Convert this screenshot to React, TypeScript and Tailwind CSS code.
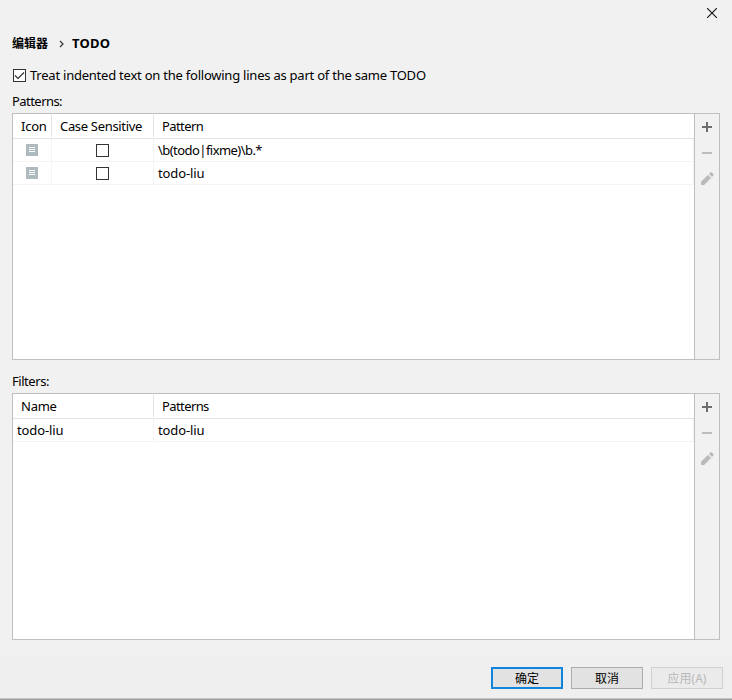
import type { ReactNode } from 'react';

const latin = "font-['Noto_Sans','Noto_Sans_CJK_SC',sans-serif]";

function Plus() {
  return (
    <svg width="16" height="16" viewBox="0 0 16 16" shapeRendering="crispEdges" fill="#6e6e6e">
      <path d="M3 7h10v2H3zM7 3h2v10H7z" />
    </svg>
  );
}

function Minus() {
  return (
    <svg width="16" height="16" viewBox="0 0 16 16" shapeRendering="crispEdges" fill="#bdbdbd">
      <path d="M3 7h10v2H3z" />
    </svg>
  );
}

function Pencil() {
  return (
    <svg width="16" height="16" viewBox="0 0 16 16" fill="#bababa">
      <path d="M2 10.8 8.9 3.9l3.1 3.1L5.1 13.9H2z" />
      <path d="M10 2.9 11.3 1.6a1.2 1.2 0 0 1 1.7 0l1.3 1.3a1.2 1.2 0 0 1 0 1.7L13 5.9z" />
    </svg>
  );
}

function LinesIcon() {
  return (
    <svg width="12" height="12" viewBox="0 0 12 12" shapeRendering="crispEdges">
      <path fill="#aeb9c0" d="M0 0h12v12H0z" />
      <path fill="#fff" d="M3 3h6v1H3zM3 5h6v1H3zM3 7h6v1H3z" />
    </svg>
  );
}

function Panel({ children }: { children: ReactNode }) {
  return (
    <div className="flex h-[247px] w-[708px] border border-[#bfbfbf] bg-white">
      <div className="w-[681px]">{children}</div>
      <div className="flex flex-1 flex-col items-center gap-[10px] border-l border-[#bfbfbf] bg-[#f1f1f1] pt-[5px]">
        <Plus />
        <Minus />
        <Pencil />
      </div>
    </div>
  );
}

function PatternRow({ children }: { children: ReactNode }) {
  return (
    <div className="flex h-[23px] border-b border-r border-[#f4f4f4]">
      <div className="flex w-[39px] items-center justify-center border-r border-[#f4f4f4]">
        <LinesIcon />
      </div>
      <div className="flex w-[102px] items-center justify-center border-r border-[#f4f4f4]">
        <div className="h-[13px] w-[13px] border border-[#333] bg-white" />
      </div>
      <div className="pl-1 leading-[22px]">{children}</div>
    </div>
  );
}

export default function App() {
  return (
    <div className={`${latin} flex h-[700px] w-[732px] flex-col overflow-hidden bg-[#f1f1f1] text-[13px] text-black`}>
      <div className="flex h-[26px] shrink-0 items-center justify-end pr-[15px]">
        <svg width="10" height="10" viewBox="0 0 10 10" stroke="#111" strokeWidth="1.1">
          <path d="M0 0l10 10M10 0L0 10" />
        </svg>
      </div>
      <div className="flex h-[36px] shrink-0 items-center pl-3 font-bold">
        <span className="w-[46px] text-[12px]">编辑器</span>
        <svg className="mr-2 ml-px" width="5" height="8" viewBox="0 0 5 8" fill="none" stroke="#333" strokeWidth="1.2">
          <path d="M1 1l3 3-3 3" />
        </svg>
        <span className="tracking-[0.2px]">TODO</span>
      </div>
      <div className="flex h-[27px] shrink-0 items-center gap-1 pl-[13px]">
        <div className="flex h-[13px] w-[13px] items-center justify-center border border-[#333] bg-white">
          <svg width="11" height="11" viewBox="0 0 11 11" fill="none" stroke="#333" strokeWidth="1.2">
            <path d="M1 5.5l3 3 6-6" />
          </svg>
        </div>
        <span className="tracking-[-0.23px] whitespace-nowrap">
          Treat indented text on the following lines as part of the same TODO
        </span>
      </div>
      <div className="h-[24px] shrink-0 pl-3 leading-[24px] tracking-[-0.55px]">Patterns:</div>
      <div className="shrink-0 pl-3">
        <Panel>
          <div className="flex h-[25px] border-b border-[#e3e3e3] pt-px pb-px leading-[23px]">
            <div className="w-[39px] border-r border-[#e3e3e3] pl-2 tracking-[-0.25px]">Icon</div>
            <div className="w-[102px] border-r border-[#e3e3e3] pl-2 tracking-[-0.32px] whitespace-nowrap">
              Case Sensitive
            </div>
            <div className="pl-2 tracking-[-0.6px]">Pattern</div>
          </div>
          <PatternRow>
            <span className="tracking-[-0.55px]">\b(todo|fixme)\b.*</span>
          </PatternRow>
          <PatternRow>
            <span className="tracking-[-0.12px]">todo-liu</span>
          </PatternRow>
        </Panel>
      </div>
      <div className="h-[33px] shrink-0 pt-[10px] pl-3 leading-[22px] tracking-[-0.45px]">Filters:</div>
      <div className="shrink-0 pl-3">
        <Panel>
          <div className="flex h-[25px] border-b border-[#e3e3e3] pt-px pb-px leading-[23px]">
            <div className="w-[141px] border-r border-[#e3e3e3] pl-2 tracking-[-0.25px]">Name</div>
            <div className="pl-2 tracking-[-0.6px]">Patterns</div>
          </div>
          <div className="flex h-[23px] border-b border-r border-[#f4f4f4] leading-[22px] tracking-[-0.12px]">
            <div className="w-[141px] border-r border-[#f4f4f4] pl-1">todo-liu</div>
            <div className="pl-1">todo-liu</div>
          </div>
        </Panel>
      </div>
      <div className="mt-[17px] flex flex-1 flex-col justify-between bg-[#efefef] pt-[10px]">
        <div className="flex justify-end gap-2 pr-[9px] text-[12px]">
          <button className="h-[22px] w-[72px] border-2 border-[#0f86dc] bg-[#e2e2e2] pt-[2px] leading-[16px]">
            确定
          </button>
          <button className="h-[22px] w-[72px] border border-[#adadad] bg-[#e2e2e2] pt-[2px] leading-[18px]">
            取消
          </button>
          <button className="h-[22px] w-[72px] border border-[#d0d0d0] bg-[#ebebeb] pt-px leading-[19px] text-[#b8b8b8]">
            应用(A)
          </button>
        </div>
        <div className="h-[2px] border-t border-[#c4c4c4] bg-[#a0a0a0]" />
      </div>
    </div>
  );
}
